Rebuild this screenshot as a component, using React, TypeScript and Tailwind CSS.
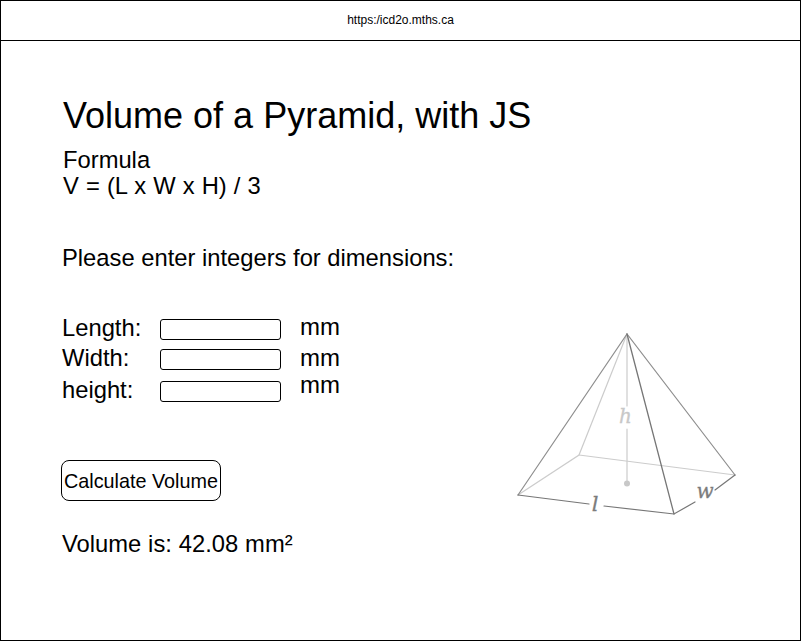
import React from 'react';

const font = { fontFamily: '"Liberation Sans", Arial, sans-serif' };

const Field = ({ label, className, unitClass }: { label: string; className: string; unitClass: string }) => (
  <div className={`flex items-start ${className}`}>
    <label className="w-[98px] h-[28px] leading-[28px] text-[23.760px]">{label}</label>
    <input type="text" className="w-[121px] h-[21px] mt-[5px] border border-black rounded-[3px] bg-white" />
    <span className={`ml-[19px] h-[28px] leading-[28px] text-[24px] ${unitClass}`}>mm</span>
  </div>
);

const Pyramid = () => (
  <svg width="250" height="210" viewBox="0 0 250 210" className="block">
    <g fill="none" strokeLinecap="round">
      <path d="M127 14 L79 135 L18 175" stroke="#cccccc" strokeWidth="1.2" />
      <path d="M79 135 L235 155" stroke="#cccccc" strokeWidth="1.2" />
      <path d="M127 14 V86 M127 109 V163" stroke="#cccccc" strokeWidth="1.2" />
      <path d="M18 175 L127 14 L235 155" stroke="#8e8e8e" strokeWidth="1.2" />
      <path d="M127 14 L174 194" stroke="#767676" strokeWidth="1.3" />
      <path d="M18 175 L89 184 M104 186 L174 194 L195 182 M215 170 L235 155" stroke="#767676" strokeWidth="1.2" />
    </g>
    <circle cx="127" cy="163.500" r="3" fill="#c8c8c8" />
    <text x="125.500" y="103" textAnchor="middle" fontSize="20" fontStyle="italic" fill="#c8c8c8" stroke="#c8c8c8" strokeWidth="0.3" fontFamily='"DejaVu Serif", serif'>h</text>
    <text x="95" y="191" textAnchor="middle" fontSize="21" fontStyle="italic" fill="#7c7c7c" stroke="#7c7c7c" strokeWidth="0.3" fontFamily='"DejaVu Serif", serif'>l</text>
    <text x="205" y="178" textAnchor="middle" fontSize="20" fontStyle="italic" fill="#7c7c7c" stroke="#7c7c7c" strokeWidth="0.3" fontFamily='"DejaVu Serif", serif'>w</text>
  </svg>
);

export default function App() {
  return (
    <div style={font} className="w-[801px] h-[641px] border border-black bg-white text-black flex flex-col overflow-hidden">
      <header className="h-[40px] shrink-0 border-b border-black flex items-center justify-center pb-[2px] text-[12px]">
        https:/icd2o.mths.ca
      </header>
      <main className="flex-1 flex pl-[61px]">
        <div className="w-[445px] flex flex-col">
          <h1 className="mt-[55px] ml-px h-[40px] leading-[40px] text-[36px] whitespace-nowrap">Volume of a Pyramid, with JS</h1>
          <p className="mt-[11px] ml-px leading-[26px] text-[23.760px] whitespace-nowrap [word-spacing:0.5px]">
            Formula<br />V = (L x W x H) / 3
          </p>
          <p className="mt-[45px] h-[28px] leading-[28px] text-[23.760px] whitespace-nowrap">Please enter integers for dimensions:</p>
          <Field label="Length:" className="mt-[42px]" unitClass="-mt-px" />
          <Field label="Width:" className="mt-[2px]" unitClass="" />
          <Field label="height:" className="mt-[4px]" unitClass="-mt-[5px]" />
          <button className="mt-[56px] -ml-px w-[160px] h-[41px] pt-[2px] border border-black rounded-[8px] bg-white text-[19.800px] text-black whitespace-nowrap">
            Calculate Volume
          </button>
          <p className="mt-[29px] h-[28px] leading-[28px] text-[23.760px] whitespace-nowrap [word-spacing:0.3px]">Volume is: 42.08 mm²</p>
        </div>
        <div className="mt-[279px] -ml-[7px]">
          <Pyramid />
        </div>
      </main>
    </div>
  );
}
